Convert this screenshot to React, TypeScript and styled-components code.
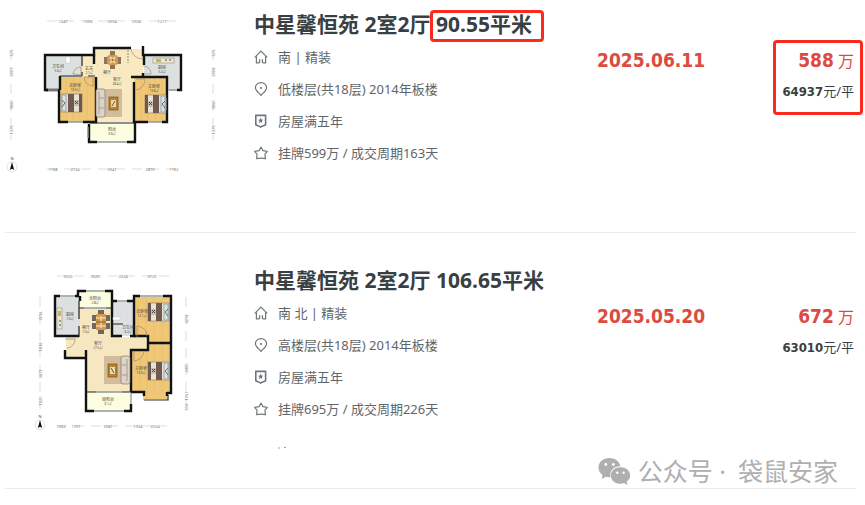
import React from 'react';
import styled, { createGlobalStyle } from 'styled-components';

const GlobalStyle = createGlobalStyle`
  * { box-sizing: border-box; }
  body {
    margin: 0;
    background: #fff;
    color: #394043;
    font-family: 'Noto Sans', 'Noto Sans CJK SC', sans-serif;
  }
`;

const Page = styled.main`
  position: relative;
  padding: 0 9px 16px 5px;
`;

const Listings = styled.ul`
  margin: 0;
  padding: 0;
  list-style: none;
`;

const Listing = styled.li<{ $lead?: boolean }>`
  display: grid;
  grid-template-columns: 249px minmax(0, 1fr) 183px 76px;
  min-height: ${(p) => (p.$lead ? 233 : 256)}px;
  padding-top: ${(p) => (p.$lead ? 8 : 31)}px;
  border-bottom: 1px solid #ebebeb;
`;

const PlanSvg = styled.svg`
  display: block;
  width: 220px;
  height: 172px;
`;

const Title = styled.h2`
  margin: 0 0 1px;
  font-size: 21px;
  line-height: 32px;
  font-weight: 700;
  white-space: nowrap;
`;

const Marked = styled.span`
  position: relative;
`;

const Outline = styled.span<{ $block?: boolean }>`
  position: absolute;
  inset: ${(p) => (p.$block ? '-6px -7px -13px -7px' : '0 -12px -4px -6px')};
  border: 3px solid #fb2a1e;
  border-radius: 4px;
  pointer-events: none;
`;

const Facts = styled.ul`
  margin: 0;
  padding: 0;
  list-style: none;
`;

const Fact = styled.li`
  display: flex;
  align-items: center;
  gap: 10px;
  height: 32px;
  color: #5f6669;
  font-size: 13px;
  line-height: 20px;
  white-space: nowrap;
`;

const FactIcon = styled.svg`
  flex: none;
  width: 14px;
  height: 14px;
  fill: none;
  stroke: #70777a;
  stroke-width: 1.2;
`;

const Residue = styled.svg`
  display: block;
  width: 10px;
  height: 2px;
  margin: 22px 0 0 24px;
`;

const DealDate = styled.time`
  padding-top: 38px;
  color: #dc4b43;
  font: 700 19px/28px 'DejaVu Sans Condensed', 'DejaVu Sans', sans-serif;
`;

const Price = styled.div`
  position: relative;
  align-self: start;
  margin-top: 38px;
  padding-right: 2px;
  text-align: right;
  white-space: nowrap;
`;

const Figure = styled.strong`
  font-family: 'DejaVu Sans Condensed', 'DejaVu Sans', sans-serif;
`;

const Total = styled.div`
  color: #dc4b43;
  font-size: 16px;
  line-height: 28px;

  ${Figure} { font-size: 19px; }
`;

const UnitPrice = styled.div`
  margin-top: 6px;
  font-size: 13px;
  line-height: 20px;
`;

const Watermark = styled.div`
  position: absolute;
  right: 27px;
  bottom: 16px;
  display: flex;
  align-items: center;
  gap: 7px;
  color: #afafaf;
  font-size: 25px;
  line-height: 36px;
  white-space: nowrap;
`;

const Account = styled.span`
  display: flex;
  gap: 12px;
`;

const ChatLogo = styled.svg`
  width: 33px;
  height: 27px;
`;

type IconName = 'home' | 'pin' | 'shield' | 'star';

const iconShapes: Record<IconName, React.ReactNode> = {
  home: (
    <>
      <path d="M.8 7.4 7 1.200l6.200 6.200M2.400 6.400v6.400h2.800M11.600 6.400v6.400H8.800" />
      <path d="M5.600 13V9.200M8.400 13V9.200" />
    </>
  ),
  pin: (
    <>
      <path d="M7 13.400C5.600 11.600 1.400 8.700 1.400 5.700a5.600 5.100 0 0 1 11.200 0c0 3-4.200 5.900-5.600 7.700Z" />
      <circle cx="7" cy="6" r="1.100" fill="#70777a" stroke="none" />
    </>
  ),
  shield: (
    <>
      <path d="M1.800 1.400h9.800v9.400c-1.600.9-3.300 1.100-4.900 2.200-1.600-1.100-3.300-1.300-4.900-2.200Z" strokeWidth="1.600" />
      <path d="m6.700 3.800.8 1.700 1.800.2-1.300 1.300.3 1.900-1.600-.9-1.600.9.3-1.900-1.300-1.300 1.800-.2Z" fill="#70777a" stroke="none" />
    </>
  ),
  star: (
    <path d="m7 1 1.900 3.600 4.400.7-2.400 3 .5 4.300c-2.700-.7-6.100-.7-8.800 0l.5-4.300-2.400-3 4.400-.7Z" strokeLinejoin="round" />
  ),
};

const Icon = ({ name }: { name: IconName }) => (
  <FactIcon viewBox="0 0 14 14" aria-hidden="true">{iconShapes[name]}</FactIcon>
);

const Bed = ({ x, y, flip }: { x: number; y: number; flip?: boolean }) => (
  <g transform={`translate(${x} ${y})${flip ? ' translate(21 0) scale(-1 1)' : ''}`}>
    <rect width="21" height="18" fill="#e9e1d3" stroke="#75695c" strokeWidth=".5" />
    <path d="M0 3v12M1 1h4v16H1z" stroke="#93a6ac" strokeWidth="1" fill="#dfe3e1" />
    <path d="m1 6 3 3-3 4" stroke="#4d7480" fill="none" />
    <path d="M7 0h6v18H7z" fill="#70594e" />
    <path d="M18 0h3v18h-3z" fill="#6d5850" />
    <path d="M13 6h5v6h-5z" fill="#c5beb1" />
    <path d="m14 7 3 3m0-3-3 3" stroke="#4d4944" />
  </g>
);

const Dining = ({ x, y }: { x: number; y: number }) => (
  <g transform={`translate(${x} ${y})`}>
    <path d="M5-3h5v18H5zM-1 3h17v7H-1z" fill="#8e745e" />
    <rect x="2" y="1" width="11" height="10" rx="3" fill="#d6964b" />
    <path d="m5 3 5 6m0-6-5 6" stroke="#ebd5a5" strokeWidth="2" />
    <circle cx="7.500" cy="6" r="1" fill="#7c5740" />
  </g>
);

const LongDining = ({ x, y }: { x: number; y: number }) => (
  <g transform={`translate(${x} ${y})`}>
    <path d="M6 0h6v4H6zM6 20h6v4H6zM0 5h4v6H0zM0 13h4v6H0zM14 5h4v6h-4zM14 13h4v6h-4z" fill="#6f6862" />
    <rect x="4" y="4" width="10" height="16" fill="#d6964b" />
    <path d="M4 8h10M4 16h10M9 6v12" stroke="#ebd5a5" strokeWidth="1.500" />
    <path d="M4 12h10" stroke="#8c5f38" />
  </g>
);

const Lounge = ({ x, y, flip }: { x: number; y: number; flip?: boolean }) => (
  <g transform={`translate(${x} ${y})${flip ? ' translate(26 0) scale(-1 1)' : ''}`}>
    <rect x="6" width="20" height="28" fill="#d2bc9c" />
    <rect x="0" width="9" height="28" rx="2" fill="#ded5c8" stroke="#82796f" strokeWidth=".7" />
    <path d="M3 3v22M3 9h5M3 19h5" stroke="#9a9188" strokeWidth=".8" />
    <rect x="13" y="8" width="9" height="13" fill="#bb812f" stroke="#74512b" strokeWidth=".7" />
    <path d="M15 11h5v7h-5z" fill="#ead9ad" />
    <path d="m16 17 3-5" stroke="#665b42" />
  </g>
);

const Sink = ({ x, y, upright }: { x: number; y: number; upright?: boolean }) => (
  <g transform={`translate(${x} ${y})${upright ? ' rotate(90)' : ''}`}>
    <rect width="21" height="5" fill="#eee7c8" stroke="#8e9292" strokeWidth=".6" />
    <rect x="3" y="1" width="5" height="3" fill="#c6b45e" />
    <path d="M12 2h2m2 0h2" stroke="#555" />
  </g>
);

const Compass = ({ x, y }: { x: number; y: number }) => (
  <g>
    <text x={x} y={y - 7} fontSize="4" textAnchor="middle" fill="#444">N</text>
    <circle cx={x} cy={y} r="5" fill="#fff" stroke="#ccc" strokeWidth=".6" />
    <path d={`M${x} ${y - 5}l2.200 8-2.200-1.200-2.200 1.200Z`} fill="#111" />
  </g>
);

const Label = ({ x, y, name, area }: { x: number; y: number; name: string; area: string }) => (
  <text x={x} y={y} fontSize="4" textAnchor="middle" fill="#4c4942">
    {name}
    <tspan x={x} dy="4" fontSize="3">{area}</tspan>
  </text>
);

type Mark = [number, number, string];

const Marks = ({ items, vertical }: { items: Mark[]; vertical?: boolean }) => (
  <g fontSize="4" textAnchor="middle" fill="#777">
    {items.map(([x, y, value]) => (
      <text key={`${x}-${y}`} x={x} y={y} transform={vertical ? `rotate(-90 ${x} ${y})` : undefined}>{value}</text>
    ))}
  </g>
);

const ThreeBayPlan = () => (
  <PlanSvg viewBox="5 8 220 172" role="img" aria-label="户型图 90.55平米">
    <path d="M46 56h48v21H60v14H46zM144 56h37v35h-13V77h-24z" fill="#dce0e1" />
    <path d="M60 77h35v45H60zM134 77h33v45h-33z" fill="#efc777" />
    <path d="M82 56h13v21H82zM95 49h48v28h-9v45H95z" fill="#f8e9c0" />
    <path d="M90 123h44v18H90z" fill="#fcfde1" />
    <path d="M66 78v43m7-43v43m7-43v43m7-43v43m54-43v43m7-43v43m7-43v43m7-43v43" stroke="#dfb35f" strokeWidth=".4" />
    <g fill="none" stroke="#101214" strokeWidth="2.400">
      <path d="M48 90h-3V55h49v-7h37M143 46v9h38v35h-4M59 90v32h9M83 122h13V77M144 56v9M143 73v4" />
      <path d="M134 82v40h14M162 122h5V77h-36M89 124v18h8M127 142h8v-20M94 55v9M45 90h14M60 76v14" />
    </g>
    <path d="M82 56v10M82 72v4M60 76h22M88 76h7M90 123h44" fill="none" stroke="#222" strokeWidth="1.200" />
    <path d="M68 122h15M148 122h14M97 142h30M48 90h10M169 90h8M88 127v11" stroke="#92999b" strokeWidth="1.400" />
    <path d="M73 74a8 8 0 0 1 8-7v8ZM84 77a9 9 0 0 0 9 9V77ZM131 49c1 6 6 10 12 10M143 66c5 0 8 4 8 8h-7M136 79h9c0 6-4 10-9 11" fill="none" stroke="#9c8e70" strokeWidth=".7" />
    <path d="M128 50v13" stroke="#8f8b7b" strokeDasharray="2 1" />
    <path d="M66 57h4v6h-4z" fill="#fff" stroke="#bbb" strokeWidth=".4" />
    <Bed x={61} y={94} />
    <Bed x={145} y={95} flip />
    <Dining x={105} y={54} />
    <Lounge x={96} y={89} />
    <Sink x={153} y={58} />
    <Label x={58} y={68} name="卫生间" area="5.6㎡" />
    <Label x={89} y={70} name="玄关" area="2.1㎡" />
    <Label x={75} y={87} name="次卧室" area="13.9㎡" />
    <Label x={107} y={74} name="餐厅" area="" />
    <Label x={117} y={81} name="客厅" area="28.4㎡" />
    <Label x={162} y={69} name="厨房" area="5.2㎡" />
    <Label x={154} y={88} name="主卧室" area="13.6㎡" />
    <Label x={112} y={131} name="阳台" area="6.6㎡" />
    <g stroke="#c8c8c8" strokeWidth=".6" strokeDasharray="10 7">
      <path d="M47 21h132M47 169h132M11 50v90M213 50v90" />
    </g>
    <Marks items={[[63, 23, '1047'], [88, 23, '1203'], [112, 23, '3994'], [136, 23, '1224'], [162, 23, '1277'], [53, 171, '1168'], [75, 171, '2734'], [112, 171, '3941'], [150, 171, '2870'], [174, 171, '1162']]} />
    <Marks vertical items={[[13, 53, '575'], [13, 72, '2007'], [13, 105, '3650'], [13, 130, '1375'], [215, 53, '575'], [215, 72, '2004'], [215, 105, '3650'], [215, 130, '1375']]} />
    <Compass x={12} y={167} />
  </PlanSvg>
);

const LPlan = () => (
  <PlanSvg viewBox="5 264 220 172" role="img" aria-label="户型图 106.65平米">
    <path d="M56 297h24v40H56zM113 302h21v34h-21z" fill="#dce0e1" />
    <path d="M135 297h36v95h-4v8h-24v-8h-12v-42h17v-12h-13z" fill="#efc777" />
    <path d="M80 308h33v29h35v13h-17v42H87v-34H66v-21h14z" fill="#f6e7c0" />
    <path d="M79 292h33v16H79zM87 392h43v18H87z" fill="#fcfde1" />
    <path d="M138 298v39m8-39v39m8-39v94m8-94v94m-22-41v40m7-40v48m7-1v1" stroke="#dfb35f" strokeWidth=".4" />
    <g fill="none" stroke="#101214" strokeWidth="2.400">
      <path d="M60 296h-5v40h24M75 296h3v-5h8M105 291h7v45h10M130 336h4v-40h6M163 296h8v97h-4M80 296v5M65 350v8h21v53h8M86 358v-8" />
      <path d="M112 301h5M127 301h7M134 336h14v7h23M148 342v8h-17v42M131 392h13v4M167 392v4M124 411h7v-7" />
    </g>
    <path d="M79 301v18M79 326v11M79 308h5M106 308h7M112 324h11M86 392h10M122 392h10M144 400h24v-5" fill="none" stroke="#222" strokeWidth="1.200" />
    <path d="M60 296h15M86 291h19M117 301h10M140 296h23M84 308h22M94 411h30M144 400h22M131 393v11M96 392h26" stroke="#92999b" strokeWidth="1.300" />
    <path d="M65 339h10c0 5-4 9-8 9M137 337v-11c6 1 10 4 10 10M134 351v10c6-1 9-4 10-10" fill="none" stroke="#9c8e70" strokeWidth=".7" />
    <path d="M113 317h7v3h-7z" fill="#fff" stroke="#bbb" strokeWidth=".4" />
    <Sink x={62} y={308} upright />
    <LongDining x={92} y={310} />
    <Lounge x={104} y={356} flip />
    <Bed x={148} y={303} flip />
    <Bed x={148} y={362} flip />
    <Label x={95} y={300} name="北阳台" area="2.8㎡" />
    <Label x={70} y={316} name="厨房" area="7.0㎡" />
    <Label x={86} y={329} name="餐厅" area="7.0㎡" />
    <Label x={98} y={345} name="客厅" area="27.5㎡" />
    <Label x={128} y={329} name="卫生间" area="6.2㎡" />
    <Label x={142} y={313} name="次卧室" area="12.1㎡" />
    <Label x={141} y={370} name="主卧室" area="13.9㎡" />
    <Label x={108} y={401} name="南阳台" area="6.1㎡" />
    <g stroke="#c8c8c8" strokeWidth=".6" strokeDasharray="10 7">
      <path d="M57 276h113M57 426h110M40 297v114M186 297v112" />
    </g>
    <Marks items={[[68, 278, '2020'], [95, 278, '2020'], [123, 278, '2024'], [152, 278, '3120'], [61, 428, '1002'], [76, 428, '1701'], [108, 428, '3941'], [138, 428, '1934'], [155, 428, '2024']]} />
    <Marks vertical items={[[42, 316, '3214'], [42, 347, '1838'], [42, 374, '3671'], [42, 401, '1520'], [188, 319, '4274'], [188, 368, '4300'], [188, 396, '1057'], [188, 407, '574']]} />
    <Compass x={40} y={425} />
  </PlanSvg>
);

interface Deal {
  area: string;
  facts: [IconName, string][];
  date: string;
  total: string;
  unit: string;
  marked?: boolean;
}

const deals: Deal[] = [
  {
    area: '90.55平米',
    facts: [['home', '南 | 精装'], ['pin', '低楼层(共18层) 2014年板楼'], ['shield', '房屋满五年'], ['star', '挂牌599万 / 成交周期163天']],
    date: '2025.06.11', total: '588', unit: '64937', marked: true,
  },
  {
    area: '106.65平米',
    facts: [['home', '南 北 | 精装'], ['pin', '高楼层(共18层) 2014年板楼'], ['shield', '房屋满五年'], ['star', '挂牌695万 / 成交周期226天']],
    date: '2025.05.20', total: '672', unit: '63010',
  },
];

export default function App() {
  return (
    <Page>
      <GlobalStyle />
      <Listings>
        {deals.map((deal) => (
          <Listing key={deal.date} $lead={deal.marked}>
            {deal.marked ? <ThreeBayPlan /> : <LPlan />}
            <div>
              <Title>
                中星馨恒苑 2室2厅{' '}
                <Marked>{deal.area}{deal.marked && <Outline />}</Marked>
              </Title>
              <Facts>
                {deal.facts.map(([icon, text]) => (
                  <Fact key={icon}><Icon name={icon} />{text}</Fact>
                ))}
              </Facts>
              {!deal.marked && (
                <Residue viewBox="0 0 10 2" aria-hidden="true">
                  <path d="M0 1h2M6 .5h2" stroke="#9ba3a7" />
                </Residue>
              )}
            </div>
            <DealDate dateTime={deal.date.replaceAll('.', '-')}>{deal.date}</DealDate>
            <Price>
              <Total><Figure>{deal.total}</Figure> 万</Total>
              <UnitPrice><Figure>{deal.unit}</Figure>元/平</UnitPrice>
              {deal.marked && <Outline $block />}
            </Price>
          </Listing>
        ))}
      </Listings>
      <Watermark>
        <ChatLogo viewBox="0 0 33 27" aria-hidden="true">
          <path d="M11.500 0C5.200 0 .5 4.100.5 9.500c0 3 1.500 5.700 4 7.400L3.800 21l4-2.300c1.500.4 3 .6 4.800.4C11 13 15.500 8.200 22.500 8.200 21.500 3.500 17 0 11.500 0Z" fill="currentColor" />
          <path d="M22.500 9.200c-5.500 0-9.700 3.500-9.700 8.200s4.200 8.300 9.700 8.300c1.300 0 2.500-.2 3.600-.6L29.500 27l-.8-3.600c2.200-1.500 3.500-3.600 3.500-6 0-4.700-4.200-8.200-9.700-8.200Z" fill="currentColor" />
          <g fill="#fff">
            <circle cx="7.800" cy="6.500" r="1.400" /><circle cx="15.300" cy="6.500" r="1.400" />
            <circle cx="19.300" cy="14.800" r="1.200" /><circle cx="25.600" cy="14.800" r="1.200" />
          </g>
        </ChatLogo>
        <Account><span>公众号 ·</span><span>袋鼠安家</span></Account>
      </Watermark>
    </Page>
  );
}
